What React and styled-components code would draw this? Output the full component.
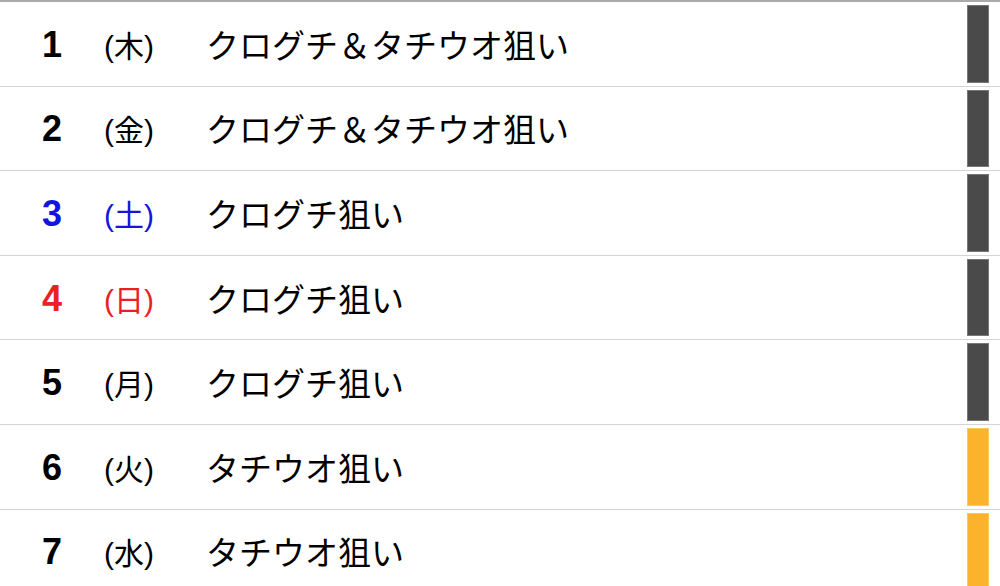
import styled, { createGlobalStyle } from "styled-components";

const GlobalStyle = createGlobalStyle`
  html, body {
    margin: 0;
    padding: 0;
    background: #ffffff;
  }
  body {
    font-family: "Liberation Sans", "Noto Sans CJK JP", sans-serif;
    color: #000;
  }
`;

const days = [
  { day: 1, week: "木", title: "クログチ＆タチウオ狙い", tone: "normal", bar: "dark" },
  { day: 2, week: "金", title: "クログチ＆タチウオ狙い", tone: "normal", bar: "dark" },
  { day: 3, week: "土", title: "クログチ狙い", tone: "sat", bar: "dark" },
  { day: 4, week: "日", title: "クログチ狙い", tone: "sun", bar: "dark" },
  { day: 5, week: "月", title: "クログチ狙い", tone: "normal", bar: "dark" },
  { day: 6, week: "火", title: "タチウオ狙い", tone: "normal", bar: "orange" },
  { day: 7, week: "水", title: "タチウオ狙い", tone: "normal", bar: "orange" },
];

const toneColor = {
  normal: "#000000",
  sat: "#1414dc",
  sun: "#e82222",
};

const barColor = {
  dark: "#4a4a4a",
  orange: "#fbb32b",
};

function App() {
  return (
    <>
      <GlobalStyle />
      <Schedule>
        {days.map((d) => (
          <Row key={d.day}>
            <DayNum $tone={d.tone}>{d.day}</DayNum>
            <Week $tone={d.tone}>({d.week})</Week>
            <Title>{d.title}</Title>
            <Bar $kind={d.bar} />
          </Row>
        ))}
      </Schedule>
    </>
  );
}

export default App;

const Schedule = styled.div`
  border-top: 2px solid #aaaaaa;
  width: 1000px;
  height: 584px;
  overflow: hidden;
`;

const Row = styled.div`
  display: grid;
  grid-template-columns: 104px 102px 1fr 22px;
  align-items: center;
  height: 84.6px;
  box-sizing: border-box;
  padding: 3px 11px 3px 0;
  border-bottom: 1px solid #d4d4d4;
`;

const DayNum = styled.div`
  text-align: center;
  font-family: "Liberation Sans", Arial, sans-serif;
  font-weight: bold;
  font-size: 36px;
  line-height: 1;
  padding-top: 2px;
  color: ${(p) => toneColor[p.$tone]};
`;

const Week = styled.div`
  font-family: "Liberation Sans", "Noto Sans CJK JP", sans-serif;
  font-size: 30px;
  color: ${(p) => toneColor[p.$tone]};
  white-space: nowrap;
`;

const Title = styled.div`
  font-family: "Noto Sans CJK JP", sans-serif;
  font-size: 33px;
  white-space: nowrap;
`;

const Bar = styled.div`
  align-self: stretch;
  box-sizing: border-box;
  background: ${(p) => barColor[p.$kind]};
  border: 1px solid rgba(255, 255, 255, 0.25);
`;
